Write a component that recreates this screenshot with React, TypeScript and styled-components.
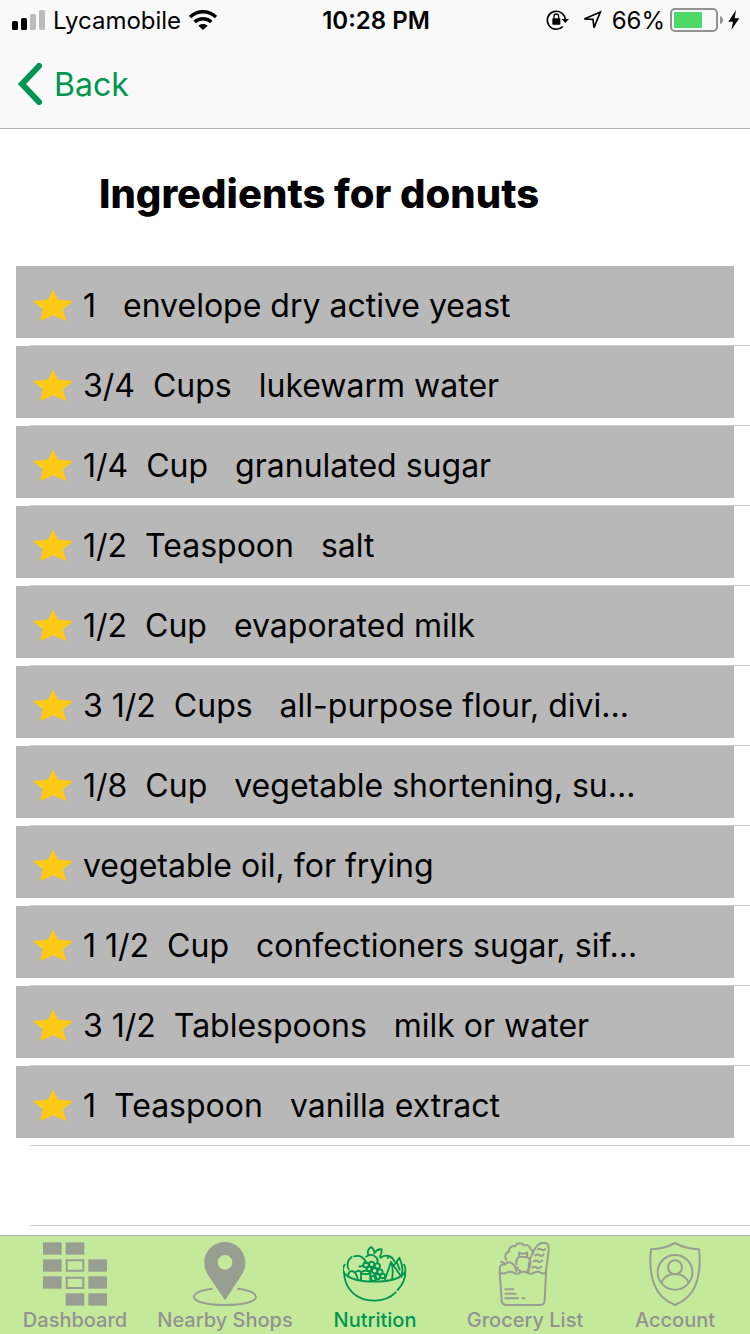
import React from 'react';
import styled, { createGlobalStyle } from 'styled-components';

const green = '#009651';
const grayIcon = '#999e92';

const GlobalStyle = createGlobalStyle`
  * { box-sizing: border-box; }
  body {
    margin: 0;
    background: #fff;
    color: #000;
    font-family: Inter, "Liberation Sans", sans-serif;
  }
`;

const Screen = styled.div`
  display: flex;
  flex-direction: column;
  min-height: 100vh;
`;

const Header = styled.header`
  background: #f9f9f9;
  border-bottom: 1px solid #b2b2b2;
`;

const StatusBar = styled.div`
  display: grid;
  grid-template-columns: 1fr auto 1fr;
  align-items: center;
  height: 40px;
  padding: 0 10px 0 12px;
  font-size: 24px;
  line-height: 38px;
`;

const StatusGroup = styled.div<{ $end?: boolean }>`
  display: flex;
  align-items: center;
  justify-content: ${(p) => (p.$end ? 'flex-end' : 'flex-start')};
  gap: ${(p) => (p.$end ? '5px' : '8px')};
  white-space: nowrap;
`;

const StatusText = styled.span`
  padding-top: 2px;
`;

const Time = styled.time`
  padding-top: 2px;
  font-weight: 600;
`;

const StatusIcons = styled.span`
  display: flex;
  align-items: center;
  gap: 13px;
  padding-right: 5px;
`;

const NavBar = styled.nav`
  display: flex;
  align-items: center;
  height: 88px;
  padding: 0 17px;
`;

const BackButton = styled.button`
  display: flex;
  align-items: center;
  gap: 12px;
  padding: 0;
  border: 0;
  background: none;
  color: ${green};
  font: inherit;
  font-size: 32px;
  line-height: 44px;
  cursor: pointer;
`;

const BackLabel = styled.span`
  padding-top: 2px;
`;

const Main = styled.main`
  flex: 1;
`;

const Title = styled.h1`
  margin: 0;
  padding: 41px 16px 48px 99px;
  font-size: 40px;
  line-height: 48px;
  font-weight: 800;
`;

const List = styled.ul`
  margin: 0;
  padding: 0;
  list-style: none;
`;

const Item = styled.li`
  &::after {
    content: '';
    display: block;
    height: 1px;
    margin: 7px 0 0 30px;
    background: #c8c7cc;
  }
`;

const Row = styled.div<{ $empty?: boolean }>`
  display: flex;
  align-items: center;
  gap: 9px;
  height: 72px;
  margin: 0 16px;
  padding: 0 16px;
  background: ${(p) => (p.$empty ? 'transparent' : '#b8b8b8')};
`;

const Ingredient = styled.span`
  padding-top: 8px;
  font-size: 32px;
  line-height: 40px;
  white-space: pre;
`;

const StarIcon = styled.svg`
  flex: none;
  margin-top: 6px;
`;

const TabBar = styled.nav`
  display: grid;
  grid-template-columns: repeat(5, 1fr);
  border-top: 1px solid #b1adb6;
  background: #c5e99b;
`;

const Tab = styled.a<{ $active?: boolean }>`
  display: flex;
  flex-direction: column;
  align-items: center;
  padding: 6px 0 0;
  color: ${(p) => (p.$active ? green : '#929292')};
  font-size: 20px;
  line-height: 28px;
  font-weight: 500;
  text-decoration: none;
  white-space: nowrap;

  svg {
    color: ${(p) => (p.$active ? green : grayIcon)};
  }
`;

const Signal = () => (
  <svg width="33" height="20" viewBox="0 0 33 20" aria-hidden="true">
    <rect x="0" y="11" width="6" height="9" rx="1.6" />
    <rect x="9" y="8" width="6" height="12" rx="1.6" />
    <rect x="18" y="4" width="6" height="16" rx="1.6" fill="#bbb" />
    <rect x="27" y="0" width="6" height="20" rx="1.6" fill="#bbb" />
  </svg>
);

const Wifi = () => (
  <svg width="28" height="20" viewBox="0 0 84 60" fill="none" stroke="#000" strokeWidth="10" aria-hidden="true">
    <path d="M3 21C25 0 59 0 81 21" />
    <path d="M17 36C31 23 53 23 67 36" />
    <path d="M42 60L28 47C36 40 48 40 56 47Z" fill="#000" stroke="none" />
  </svg>
);

const RotationLock = () => (
  <svg width="23" height="22" viewBox="0 0 69 66" fill="none" stroke="#000" aria-hidden="true">
    <path d="M58 32A27 27 0 1 0 50 53" strokeWidth="5" />
    <path d="M47 30H69L58 42Z" fill="#000" stroke="none" />
    <rect x="19" y="28" width="24" height="19" rx="2" fill="#000" stroke="none" />
    <path d="M24 29V22A7 7 0 0 1 38 22V29" strokeWidth="4" />
  </svg>
);

const Location = () => (
  <svg width="20" height="20" viewBox="0 0 60 60" fill="none" stroke="#000" strokeWidth="5" strokeLinejoin="miter" aria-hidden="true">
    <path d="M7 27L55 6L36 53L33 28Z" />
  </svg>
);

const Battery = () => (
  <svg width="53" height="24" viewBox="0 0 53 24" aria-hidden="true">
    <rect x="1" y="1" width="46" height="22" rx="4" fill="none" stroke="#929292" strokeWidth="2" />
    <rect x="4" y="4" width="28" height="16" rx="1" fill="#4cd964" />
    <path d="M50 8Q53 9 53 12Q53 15 50 16Z" fill="#929292" />
  </svg>
);

const Bolt = () => (
  <svg width="12" height="20" viewBox="0 0 36 60" aria-hidden="true">
    <path d="M24 0L1 35H15L10 60L34 25H20Z" />
  </svg>
);

const Chevron = () => (
  <svg width="25" height="42" viewBox="0 0 25 42" fill="none" stroke="currentColor" strokeWidth="6" strokeLinecap="round" strokeLinejoin="miter" aria-hidden="true">
    <path d="M22 3L5 21L22 39" />
  </svg>
);

const Star = () => (
  <StarIcon width="42" height="32" viewBox="0 0 42 32" aria-hidden="true">
    <path d="M21 0L26 10.500L41.500 12L31 20.500L34.500 32L21 26.500L8 32L11 20.500L0.500 12L16 10.500Z" fill="#fcc917" />
  </StarIcon>
);

const DashboardIcon = () => (
  <svg width="64" height="64" viewBox="99 36 192 192" fill="currentColor" aria-hidden="true">
    <rect x="99" y="37" width="56" height="37" />
    <rect x="167" y="37" width="56" height="37" />
    <rect x="99" y="88" width="56" height="37" />
    <rect x="235" y="88" width="56" height="37" />
    <rect x="99" y="139" width="56" height="37" />
    <rect x="235" y="139" width="56" height="37" />
    <rect x="167" y="190" width="56" height="37" />
    <rect x="235" y="190" width="56" height="37" />
    <path d="M170 91H220V122H170ZM170 143H220V174H170Z" fill="none" stroke="currentColor" strokeWidth="6" />
  </svg>
);

const PinIcon = () => (
  <svg width="64" height="64" viewBox="129 36 192 192" fill="currentColor" aria-hidden="true">
    <path fillRule="evenodd" d="M225 36C190 36 163 64 163 98C163 112 167 124 174 135L225 211L275 135C282 124 286 112 286 98C286 64 259 36 225 36ZM225 75A22 22 0 1 1 225 119A22 22 0 1 1 225 75Z" />
    <path d="M188 176C155 180 132 188 132 201C132 215 170 225 225 225S318 215 318 201C318 188 296 180 262 176" fill="none" stroke="currentColor" strokeWidth="6" />
  </svg>
);

const BowlIcon = () => (
  <svg width="64" height="64" viewBox="68 36 192 192" fill="none" stroke="currentColor" strokeWidth="5.500" strokeLinecap="round" strokeLinejoin="round" aria-hidden="true">
    <path d="M73 104C67 113 66 124 74 132C90 148 124 155 162 155S234 148 250 132C257 124 256 112 251 104" />
    <path d="M71 126C72 176 108 212 162 212C190 212 212 201 226 187M232 180C247 164 255 145 255 126" />
    <path d="M94 81A28 28 0 0 0 85 118M101 79C120 74 134 84 137 100" />
    <path d="M84 136C84 118 105 117 112 146M107 125C113 121 119 122 122 126" />
    <path d="M137 80C145 73 158 72 168 82C172 87 173 93 171 98M143 72C141 63 146 55 152 51C158 55 163 61 162 71M164 67C169 60 177 57 184 58C185 65 183 73 178 80" />
    <path d="M181 83C195 72 215 77 222 94M202 84H203" />
    <path d="M126 107C123 109 119 110 117 109M122 127C129 120 144 120 150 126V151M122 128V149M122 129C130 134 143 134 150 129" />
    <circle cx="137" cy="105" r="8" />
    <circle cx="154" cy="103" r="8" />
    <circle cx="171" cy="108" r="8" />
    <circle cx="146" cy="117" r="7" />
    <circle cx="163" cy="122" r="8" />
    <circle cx="179" cy="126" r="8" />
    <circle cx="171" cy="140" r="8" />
    <circle cx="187" cy="138" r="7" />
    <circle cx="160" cy="145" r="8" />
    <path d="M194 148L212 96L243 140M212 96C217 108 218 130 215 148M221 106L237 83C245 100 249 117 244 134M229 96L238 119" />
  </svg>
);

const GroceryIcon = () => (
  <svg width="64" height="64" viewBox="99 36 192 192" fill="none" stroke="currentColor" strokeWidth="6" strokeLinecap="round" strokeLinejoin="round" aria-hidden="true">
    <path d="M119 127L125 211Q126 225 140 225H240Q254 225 254 211L258 127" />
    <path d="M119 127Q129 134 140 128Q151 122 160 128Q171 135 181 128Q191 122 201 128Q212 135 223 128Q233 122 242 128Q250 133 258 127" />
    <path d="M120 123C116 111 122 103 135 103C145 91 164 97 169 124M135 103C132 98 128 96 123 95" />
    <path d="M139 89C132 78 138 66 147 66C145 54 156 46 165 49C170 37 187 37 192 47C202 42 211 49 211 58C218 60 220 66 219 72" />
    <path d="M177 68Q190 74 202 68L201 80Q189 83 178 79ZM178 80C170 86 167 94 169 103M201 81C207 84 211 91 211 98M171 111C173 118 178 123 185 126M211 98Q211 113 201 125" />
    <path d="M206 124C204 101 213 75 226 54C234 40 250 34 261 41C270 48 266 62 264 75L258 125" />
    <path d="M233 59Q239 54 244 59T255 57M226 76Q233 71 239 76T251 73M221 94Q228 89 234 94T247 91M217 113Q224 108 230 113T244 110" />
    <path d="M136 178H160M136 191H167M136 205H174M187 205H194" />
  </svg>
);

const AccountIcon = () => (
  <svg width="64" height="64" viewBox="69 36 192 192" fill="none" stroke="currentColor" strokeWidth="6" strokeLinejoin="round" aria-hidden="true">
    <path d="M165 39C143 51 118 57 93 58C89 91 90 132 104 167C115 194 137 214 165 225C193 214 215 194 226 167C240 132 241 91 237 58C212 57 187 51 165 39Z" />
    <circle cx="165" cy="127" r="52" />
    <circle cx="165" cy="112" r="21" />
    <path d="M124 158C132 140 148 132 165 132S198 140 206 158" />
  </svg>
);

const ingredients = [
  '1   envelope dry active yeast',
  '3/4  Cups   lukewarm water',
  '1/4  Cup   granulated sugar',
  '1/2  Teaspoon   salt',
  '1/2  Cup   evaporated milk',
  '3 1/2  Cups   all-purpose flour, divi...',
  '1/8  Cup   vegetable shortening, su...',
  'vegetable oil, for frying',
  '1 1/2  Cup   confectioners sugar, sif...',
  '3 1/2  Tablespoons   milk or water',
  '1  Teaspoon   vanilla extract',
];

const tabs = [
  { label: 'Dashboard', Icon: DashboardIcon },
  { label: 'Nearby Shops', Icon: PinIcon },
  { label: 'Nutrition', Icon: BowlIcon, active: true },
  { label: 'Grocery List', Icon: GroceryIcon },
  { label: 'Account', Icon: AccountIcon },
];

export default function App() {
  return (
    <Screen>
      <GlobalStyle />
      <Header>
        <StatusBar>
          <StatusGroup>
            <Signal />
            <StatusText>Lycamobile</StatusText>
            <Wifi />
          </StatusGroup>
          <Time>10:28 PM</Time>
          <StatusGroup $end>
            <StatusIcons>
              <RotationLock />
              <Location />
            </StatusIcons>
            <StatusText>66%</StatusText>
            <Battery />
            <Bolt />
          </StatusGroup>
        </StatusBar>
        <NavBar>
          <BackButton type="button">
            <Chevron />
            <BackLabel>Back</BackLabel>
          </BackButton>
        </NavBar>
      </Header>
      <Main>
        <Title>Ingredients for donuts</Title>
        <List>
          {ingredients.map((text) => (
            <Item key={text}>
              <Row>
                <Star />
                <Ingredient>{text}</Ingredient>
              </Row>
            </Item>
          ))}
          <Item aria-hidden="true">
            <Row $empty />
          </Item>
        </List>
      </Main>
      <TabBar>
        {tabs.map(({ label, Icon, active }) => (
          <Tab key={label} href="#" $active={active} aria-current={active ? 'page' : undefined}>
            <Icon />
            {label}
          </Tab>
        ))}
      </TabBar>
    </Screen>
  );
}
